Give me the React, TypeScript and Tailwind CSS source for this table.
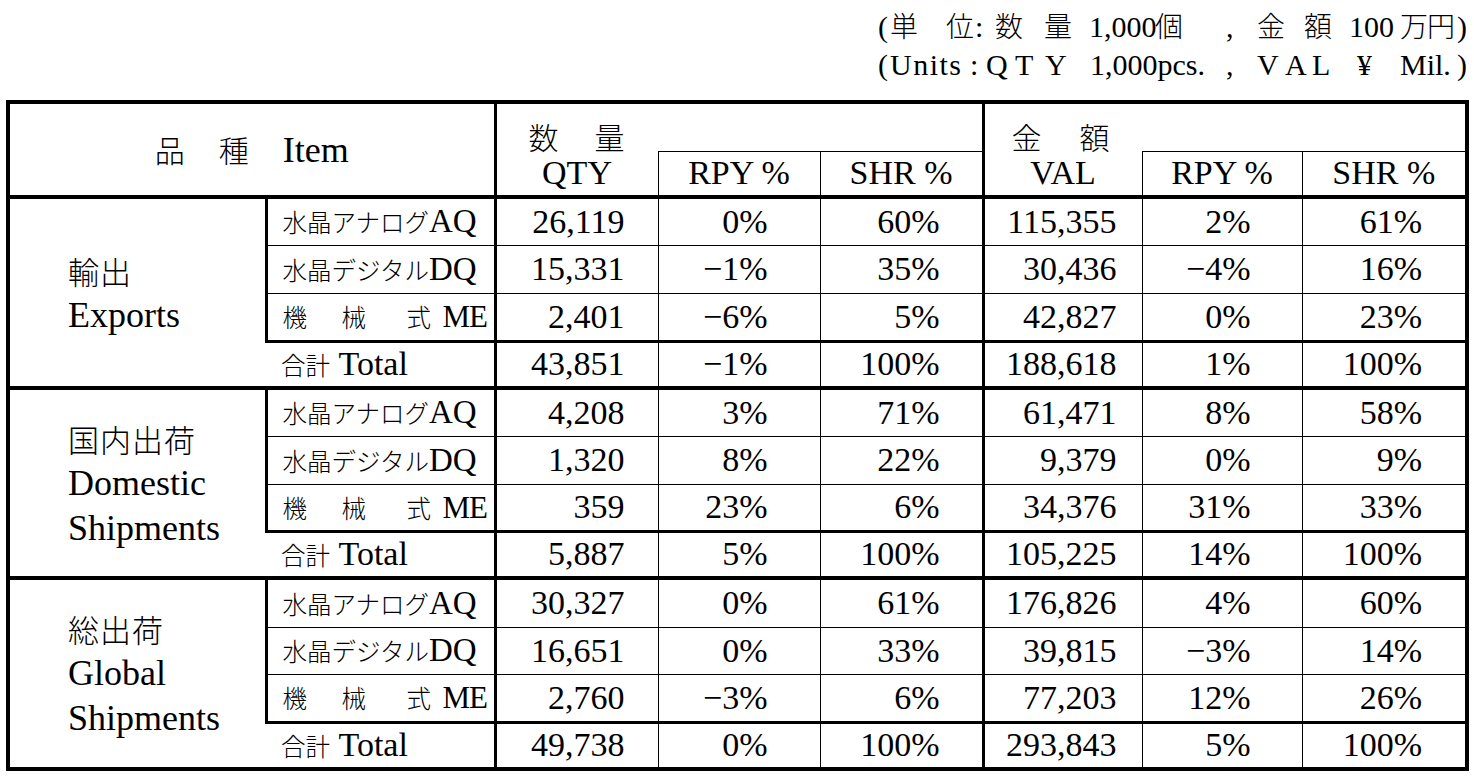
import React from "react";

type Tok = [string, string, boolean, string?];

const line1: Tok[] = [
  ["w-[12px]", "(", false],
  ["w-[56px]", "単", true],
  ["w-[29px]", "位", true],
  ["w-[20px]", ":", false],
  ["w-[49px]", "数", true],
  ["w-[45px]", "量", true],
  ["w-[66px]", "1,000", false],
  ["w-[71px]", "個", true],
  ["w-[31px]", ",", false],
  ["w-[47px]", "金", true],
  ["w-[45px]", "額", true],
  ["w-[51px]", "100", false],
  ["w-[27px]", "万", true],
  ["w-[30px]", "円", true],
  ["w-[11px]", ")", false],
];

const line2: Tok[] = [
  ["w-[12px]", "(", false],
  ["w-[80px]", "Units", false, "tracking-[1.5px]"],
  ["w-[16px]", ":", false],
  ["w-[29px]", "Q", false],
  ["w-[30px]", "T", false],
  ["w-[45px]", "Y", false],
  ["w-[136px]", "1,000pcs.", false],
  ["w-[31px]", ",", false],
  ["w-[28px]", "V", false],
  ["w-[27px]", "A", false],
  ["w-[45px]", "L", false],
  ["w-[43px]", "¥", false],
  ["w-[57px]", "Mil.", false],
  ["w-[11px]", ")", false],
];

function NoteLine({ toks }: { toks: Tok[] }) {
  return (
    <div className="h-[40px] leading-[40px] whitespace-nowrap">
      {toks.map(([w, t, cjk, extra], i) => (
        <span
          key={i}
          className={`inline-block ${w} ${
            cjk ? "text-[28px] font-light font-['Noto_Sans_CJK_JP',sans-serif]" : "text-[30px]"
          } ${extra ?? ""}`}
        >
          {t}
        </span>
      ))}
    </div>
  );
}

const JP = "font-light font-['Noto_Sans_CJK_JP',sans-serif]";

const itemAQ = (
  <span className="whitespace-nowrap">
    <span className={`text-[24.5px] ${JP}`}>水晶アナログ</span>
    <span className="text-[33px]">AQ</span>
  </span>
);
const itemDQ = (
  <span className="whitespace-nowrap">
    <span className={`text-[24.5px] ${JP}`}>水晶デジタル</span>
    <span className="text-[33px]">DQ</span>
  </span>
);
const itemME = (
  <span className="whitespace-nowrap">
    <span className={`inline-block w-[59px] text-[24.5px] ${JP}`}>機</span>
    <span className={`inline-block w-[65px] text-[24.5px] ${JP}`}>械</span>
    <span className={`inline-block w-[36px] text-[24.5px] ${JP}`}>式</span>
    <span className="text-[31px] tracking-[-1px]">ME</span>
  </span>
);
const itemTotal = (
  <span className="whitespace-nowrap">
    <span className={`text-[24.5px] ${JP}`}>合計</span>
    <span className="text-[34px]"> Total</span>
  </span>
);
const items = [itemAQ, itemDQ, itemME, itemTotal];

type Block = { jp: string; en: string[]; rows: string[][]; heights: string[] };

const blocks: Block[] = [
  {
    jp: "輸出",
    en: ["Exports"],
    heights: ["h-[48px]", "h-[48px]", "h-[48px]", "h-[47px]"],
    rows: [
      ["26,119", "0%", "60%", "115,355", "2%", "61%"],
      ["15,331", "−1%", "35%", "30,436", "−4%", "16%"],
      ["2,401", "−6%", "5%", "42,827", "0%", "23%"],
      ["43,851", "−1%", "100%", "188,618", "1%", "100%"],
    ],
  },
  {
    jp: "国内出荷",
    en: ["Domestic", "Shipments"],
    heights: ["h-[48px]", "h-[48px]", "h-[47px]", "h-[47px]"],
    rows: [
      ["4,208", "3%", "71%", "61,471", "8%", "58%"],
      ["1,320", "8%", "22%", "9,379", "0%", "9%"],
      ["359", "23%", "6%", "34,376", "31%", "33%"],
      ["5,887", "5%", "100%", "105,225", "14%", "100%"],
    ],
  },
  {
    jp: "総出荷",
    en: ["Global", "Shipments"],
    heights: ["h-[49px]", "h-[47px]", "h-[48px]", "h-[47px]"],
    rows: [
      ["30,327", "0%", "61%", "176,826", "4%", "60%"],
      ["16,651", "0%", "33%", "39,815", "−3%", "14%"],
      ["2,760", "−3%", "6%", "77,203", "12%", "26%"],
      ["49,738", "0%", "100%", "293,843", "5%", "100%"],
    ],
  },
];

const numPad = ["pr-[33px]", "pr-[52px]", "pr-[42px]", "pr-[25px]", "pr-[51px]", "pr-[43px]"];
const numRight = ["border-r", "border-r", "border-r-[3px]", "border-r", "border-r", ""];

export default function App() {
  return (
    <div className="w-[1474px] h-[776px] overflow-hidden bg-white text-black font-['Liberation_Serif','Noto_Sans_CJK_JP',serif]">
      <div className="h-[100px] pt-[5px] pr-[6px] flex flex-col items-end">
        <NoteLine toks={line1} />
        <NoteLine toks={line2} />
      </div>

      <table className="ml-[6px] w-[1463px] table-fixed border-collapse border-[4px] border-black leading-none">
        <colgroup>
          <col className="w-[258px]" />
          <col className="w-[229px]" />
          <col className="w-[163px]" />
          <col className="w-[162px]" />
          <col className="w-[163px]" />
          <col className="w-[159px]" />
          <col className="w-[160px]" />
          <col className="w-[165px]" />
        </colgroup>
        <thead>
          <tr className="h-[49px]">
            <td colSpan={2} rowSpan={2} className="border-r-[3px] border-b-[4px] border-black">
              <div className="flex justify-center items-baseline gap-[34px]">
                <span className={`text-[30px] ${JP}`}>品</span>
                <span className={`text-[30px] ${JP}`}>種</span>
                <span className="text-[36px]">Item</span>
              </div>
            </td>
            <td colSpan={3} className="border-r-[3px] border-black align-bottom pl-[32px]">
              <div className={`text-[30px] leading-none ${JP} whitespace-nowrap`}>
                <span className="inline-block w-[66px]">数</span>
                <span className="inline-block">量</span>
              </div>
            </td>
            <td colSpan={3} className="align-bottom pl-[27px]">
              <div className={`text-[30px] leading-none ${JP} whitespace-nowrap`}>
                <span className="inline-block w-[68px]">金</span>
                <span className="inline-block">額</span>
              </div>
            </td>
          </tr>
          <tr className="h-[46px] text-[34px]">
            <td className="border-r border-b-[4px] border-black text-center">QTY</td>
            <td className="border-r border-t border-b-[4px] border-black text-center">RPY %</td>
            <td className="border-r-[3px] border-t border-b-[4px] border-black text-center">SHR %</td>
            <td className="border-r border-b-[4px] border-black text-center">VAL</td>
            <td className="border-r border-t border-b-[4px] border-black text-center">RPY %</td>
            <td className="border-t border-b-[4px] border-black text-center">SHR %</td>
          </tr>
        </thead>
        <tbody>
          {blocks.map((b, bi) => (
            <React.Fragment key={bi}>
              {b.rows.map((v, ri) => {
                const isTotal = ri === 3;
                const bottom =
                  ri < 2 ? "border-b" : ri === 2 ? "border-b-[3px]" : "border-b-[4px]";
                return (
                  <tr key={ri} className={b.heights[ri]}>
                    {ri === 0 && (
                      <td rowSpan={4} className="border-b-[4px] border-black pl-[58px] align-middle">
                        <div className={`h-[45px] leading-[45px] text-[31px] tracking-[1px] ${JP}`}>
                          {b.jp}
                        </div>
                        {b.en.map((e) => (
                          <div key={e} className="h-[45px] leading-[45px] text-[36px]">
                            {e}
                          </div>
                        ))}
                      </td>
                    )}
                    <td
                      className={`${isTotal ? "" : "border-l-[3px]"} border-r-[3px] ${bottom} border-black pl-[15px]`}
                    >
                      {items[ri]}
                    </td>
                    {v.map((x, i) => (
                      <td
                        key={i}
                        className={`text-right text-[34px] whitespace-nowrap ${numPad[i]} ${numRight[i]} ${bottom} border-black`}
                      >
                        {x}
                      </td>
                    ))}
                  </tr>
                );
              })}
            </React.Fragment>
          ))}
        </tbody>
      </table>
    </div>
  );
}
